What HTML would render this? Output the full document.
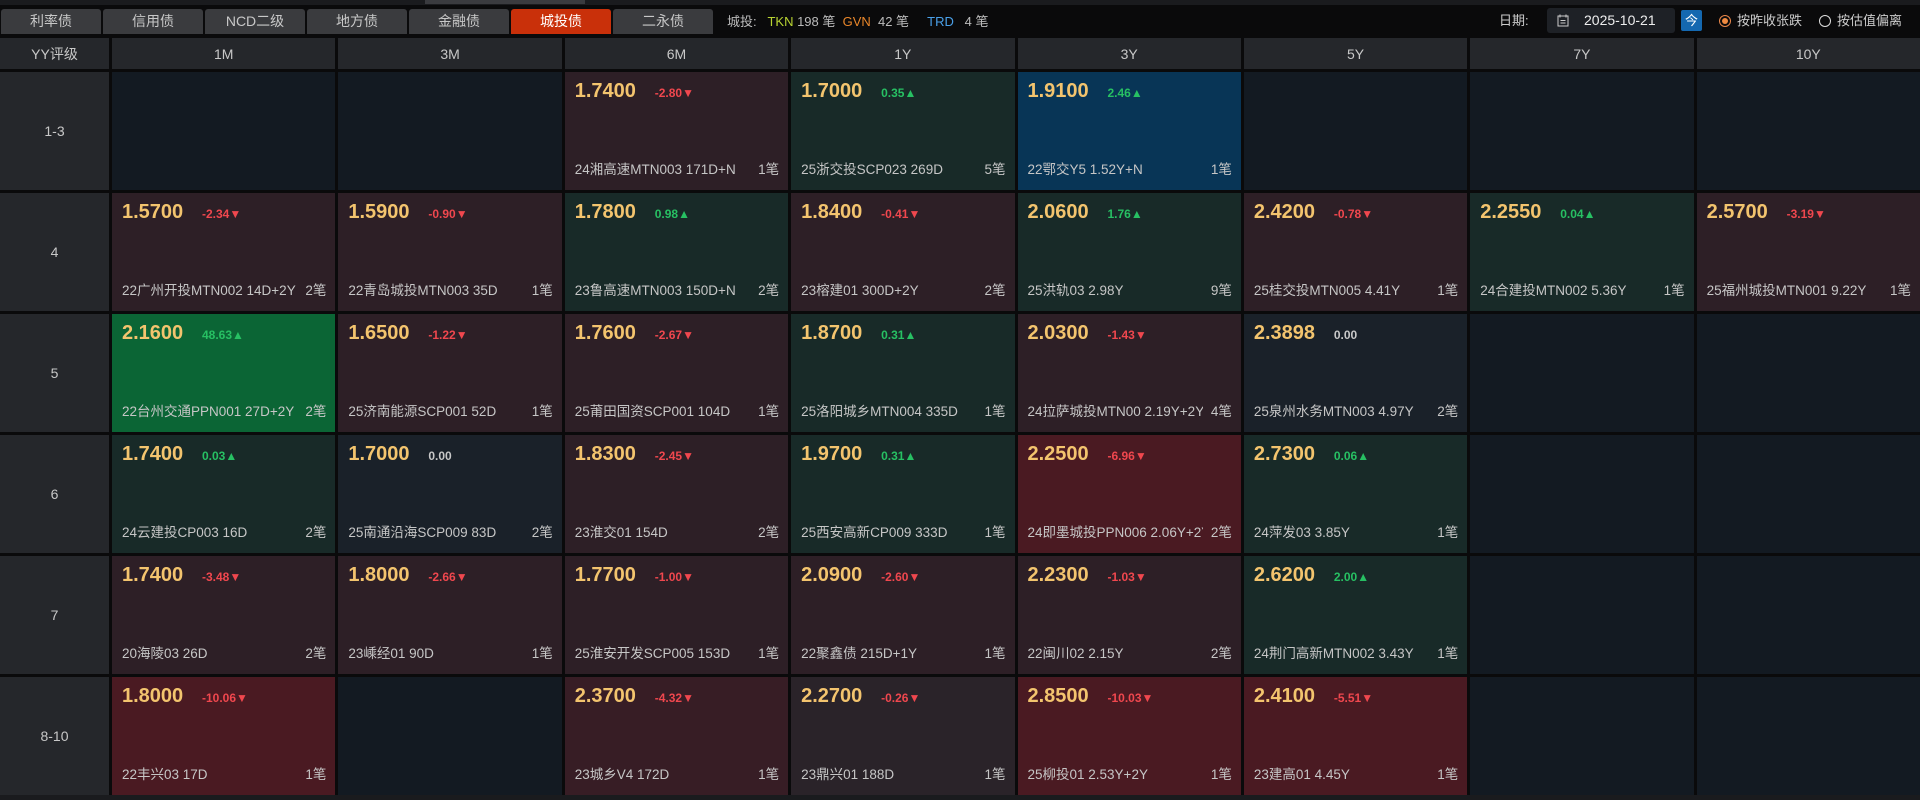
<!DOCTYPE html>
<html><head><meta charset="utf-8"><style>
*{margin:0;padding:0;box-sizing:border-box}
body{width:1920px;height:800px;background:#0a0a0b;font-family:"Liberation Sans","Noto Sans CJK SC",sans-serif;color:#ccc;overflow:hidden;position:relative}
.topstrip{position:absolute;left:0;top:0;width:1920px;height:5px;background:#1a1b1e}
.topstrip i{position:absolute;left:425px;width:160px;top:0;height:4px;background:#3a3b3f}
.tabs{position:absolute;left:1px;top:9px;height:25px;display:flex;gap:2px}
.tab{width:100px;height:25px;background:#3a3b3e;color:#c8c8c8;font-size:14px;text-align:center;line-height:25px;border-radius:3px 3px 0 0}
.tab.on{background:#c9300a;color:#fff}
.stats{position:absolute;left:727px;top:9px;line-height:25px;font-size:13px;color:#bbb}
.stats b{font-weight:normal}
.right{position:absolute;top:8px;height:25px;font-size:13px;color:#ccc;line-height:25px}
.datebox{position:absolute;left:1547px;top:8px;width:128px;height:25px;background:#1e2126;border-radius:3px;font-size:14px;color:#eee;line-height:25px}
.today{position:absolute;left:1681px;top:10px;width:21px;height:21px;background:#1468b0;border-radius:2px;color:#fff;font-size:13px;text-align:center;line-height:21px}
.radio{position:absolute;top:15px;width:12px;height:12px;border-radius:50%;border:1.5px solid #ddd}
.radio.on{border-color:#e8864a}
.radio.on::after{content:"";position:absolute;left:1.5px;top:1.5px;width:6px;height:6px;border-radius:50%;background:#f08a40}
.grid{position:absolute;left:0;top:38px;width:1920px;display:grid;grid-template-columns:109px repeat(8,1fr);grid-template-rows:31px repeat(6,118px);gap:3px}
.h{background:#25272b;color:#c8c8c8;font-size:14px;display:flex;align-items:center;justify-content:center}
.c{background:#131a22;position:relative;padding:8px 9px}
.v{font-size:20px;font-weight:bold;color:#f3c46e;position:absolute;left:10px;top:8px}
.d{font-size:12px;font-weight:bold;position:absolute;left:90px;top:14px}
.up{color:#27c063}.dn{color:#f0474e}.z{color:#c8c8c8}
.n{position:absolute;left:10px;right:9px;bottom:12px;font-size:13.5px;color:#c6c6c6;display:flex;justify-content:space-between;white-space:nowrap}
.n span:first-child{overflow:hidden;max-width:175px}
.r{background:#2d1f26}.g{background:#182a28}.b{background:#083556}.bg{background:#0b6535}.dr{background:#4a1a22}.mr{background:#371d25}.lr{background:#2a2329}.nz{background:#1a2129}
.bot{position:absolute;left:0;top:795px;width:1920px;height:5px;background:#1a1b1e}
</style></head><body>
<div class="topstrip"><i></i></div>
<div class="tabs"><div class="tab">利率债</div><div class="tab">信用债</div><div class="tab">NCD二级</div><div class="tab">地方债</div><div class="tab">金融债</div><div class="tab on">城投债</div><div class="tab">二永债</div></div>
<div class="stats">城投:&nbsp;&nbsp; <b style="color:#b8d432">TKN</b> 198 笔&nbsp; <b style="color:#e8862a">GVN</b>&nbsp; 42 笔&nbsp;&nbsp;&nbsp;&nbsp; <b style="color:#4aa0e8">TRD</b>&nbsp;&nbsp; 4 笔</div>
<div class="right" style="left:1499px">日期:</div>
<div class="datebox"><svg style="position:absolute;left:10px;top:6px" width="12" height="13" viewBox="0 0 12 13"><rect x="1" y="2" width="10" height="10" fill="none" stroke="#ccc"/><path d="M3 0.5v3M9 0.5v3M3.5 6.5h5M3.5 9h5" stroke="#ccc"/></svg><span style="position:absolute;left:37px">2025-10-21</span></div>
<div class="today">今</div>
<div class="radio on" style="left:1719px"></div><div class="right" style="left:1737px">按昨收张跌</div>
<div class="radio" style="left:1819px"></div><div class="right" style="left:1837px">按估值偏离</div>
<div class="grid">
<div class="h">YY评级</div><div class="h">1M</div><div class="h">3M</div><div class="h">6M</div><div class="h">1Y</div><div class="h">3Y</div><div class="h">5Y</div><div class="h">7Y</div><div class="h">10Y</div>

<div class="h">1-3</div>
<div class="c"></div><div class="c"></div>
<div class="c r"><div class="v">1.7400</div><div class="d dn">-2.80▼</div><div class="n"><span>24湘高速MTN003 171D+N</span><span>1笔</span></div></div>
<div class="c g"><div class="v">1.7000</div><div class="d up">0.35▲</div><div class="n"><span>25浙交投SCP023 269D</span><span>5笔</span></div></div>
<div class="c b"><div class="v">1.9100</div><div class="d up">2.46▲</div><div class="n"><span>22鄂交Y5 1.52Y+N</span><span>1笔</span></div></div>
<div class="c"></div><div class="c"></div><div class="c"></div>

<div class="h">4</div>
<div class="c r"><div class="v">1.5700</div><div class="d dn">-2.34▼</div><div class="n"><span>22广州开投MTN002 14D+2Y</span><span>2笔</span></div></div>
<div class="c r"><div class="v">1.5900</div><div class="d dn">-0.90▼</div><div class="n"><span>22青岛城投MTN003 35D</span><span>1笔</span></div></div>
<div class="c g"><div class="v">1.7800</div><div class="d up">0.98▲</div><div class="n"><span>23鲁高速MTN003 150D+N</span><span>2笔</span></div></div>
<div class="c r"><div class="v">1.8400</div><div class="d dn">-0.41▼</div><div class="n"><span>23榕建01 300D+2Y</span><span>2笔</span></div></div>
<div class="c g"><div class="v">2.0600</div><div class="d up">1.76▲</div><div class="n"><span>25洪轨03 2.98Y</span><span>9笔</span></div></div>
<div class="c r"><div class="v">2.4200</div><div class="d dn">-0.78▼</div><div class="n"><span>25桂交投MTN005 4.41Y</span><span>1笔</span></div></div>
<div class="c g"><div class="v">2.2550</div><div class="d up">0.04▲</div><div class="n"><span>24合建投MTN002 5.36Y</span><span>1笔</span></div></div>
<div class="c r"><div class="v">2.5700</div><div class="d dn">-3.19▼</div><div class="n"><span>25福州城投MTN001 9.22Y</span><span>1笔</span></div></div>

<div class="h">5</div>
<div class="c bg"><div class="v">2.1600</div><div class="d up">48.63▲</div><div class="n"><span>22台州交通PPN001 27D+2Y</span><span>2笔</span></div></div>
<div class="c r"><div class="v">1.6500</div><div class="d dn">-1.22▼</div><div class="n"><span>25济南能源SCP001 52D</span><span>1笔</span></div></div>
<div class="c r"><div class="v">1.7600</div><div class="d dn">-2.67▼</div><div class="n"><span>25莆田国资SCP001 104D</span><span>1笔</span></div></div>
<div class="c g"><div class="v">1.8700</div><div class="d up">0.31▲</div><div class="n"><span>25洛阳城乡MTN004 335D</span><span>1笔</span></div></div>
<div class="c r"><div class="v">2.0300</div><div class="d dn">-1.43▼</div><div class="n"><span>24拉萨城投MTN00 2.19Y+2Y</span><span>4笔</span></div></div>
<div class="c nz"><div class="v">2.3898</div><div class="d z">0.00</div><div class="n"><span>25泉州水务MTN003 4.97Y</span><span>2笔</span></div></div>
<div class="c"></div><div class="c"></div>

<div class="h">6</div>
<div class="c g"><div class="v">1.7400</div><div class="d up">0.03▲</div><div class="n"><span>24云建投CP003 16D</span><span>2笔</span></div></div>
<div class="c nz"><div class="v">1.7000</div><div class="d z">0.00</div><div class="n"><span>25南通沿海SCP009 83D</span><span>2笔</span></div></div>
<div class="c r"><div class="v">1.8300</div><div class="d dn">-2.45▼</div><div class="n"><span>23淮交01 154D</span><span>2笔</span></div></div>
<div class="c g"><div class="v">1.9700</div><div class="d up">0.31▲</div><div class="n"><span>25西安高新CP009 333D</span><span>1笔</span></div></div>
<div class="c dr"><div class="v">2.2500</div><div class="d dn">-6.96▼</div><div class="n"><span>24即墨城投PPN006 2.06Y+2Y</span><span>2笔</span></div></div>
<div class="c g"><div class="v">2.7300</div><div class="d up">0.06▲</div><div class="n"><span>24萍发03 3.85Y</span><span>1笔</span></div></div>
<div class="c"></div><div class="c"></div>

<div class="h">7</div>
<div class="c r"><div class="v">1.7400</div><div class="d dn">-3.48▼</div><div class="n"><span>20海陵03 26D</span><span>2笔</span></div></div>
<div class="c r"><div class="v">1.8000</div><div class="d dn">-2.66▼</div><div class="n"><span>23嵊经01 90D</span><span>1笔</span></div></div>
<div class="c r"><div class="v">1.7700</div><div class="d dn">-1.00▼</div><div class="n"><span>25淮安开发SCP005 153D</span><span>1笔</span></div></div>
<div class="c r"><div class="v">2.0900</div><div class="d dn">-2.60▼</div><div class="n"><span>22聚鑫债 215D+1Y</span><span>1笔</span></div></div>
<div class="c r"><div class="v">2.2300</div><div class="d dn">-1.03▼</div><div class="n"><span>22闽川02 2.15Y</span><span>2笔</span></div></div>
<div class="c g"><div class="v">2.6200</div><div class="d up">2.00▲</div><div class="n"><span>24荆门高新MTN002 3.43Y</span><span>1笔</span></div></div>
<div class="c"></div><div class="c"></div>

<div class="h">8-10</div>
<div class="c dr"><div class="v">1.8000</div><div class="d dn">-10.06▼</div><div class="n"><span>22丰兴03 17D</span><span>1笔</span></div></div>
<div class="c"></div>
<div class="c mr"><div class="v">2.3700</div><div class="d dn">-4.32▼</div><div class="n"><span>23城乡V4 172D</span><span>1笔</span></div></div>
<div class="c lr"><div class="v">2.2700</div><div class="d dn">-0.26▼</div><div class="n"><span>23鼎兴01 188D</span><span>1笔</span></div></div>
<div class="c dr"><div class="v">2.8500</div><div class="d dn">-10.03▼</div><div class="n"><span>25柳投01 2.53Y+2Y</span><span>1笔</span></div></div>
<div class="c dr"><div class="v">2.4100</div><div class="d dn">-5.51▼</div><div class="n"><span>23建高01 4.45Y</span><span>1笔</span></div></div>
<div class="c"></div><div class="c"></div>
</div>
<div class="bot"></div>
</body></html>
